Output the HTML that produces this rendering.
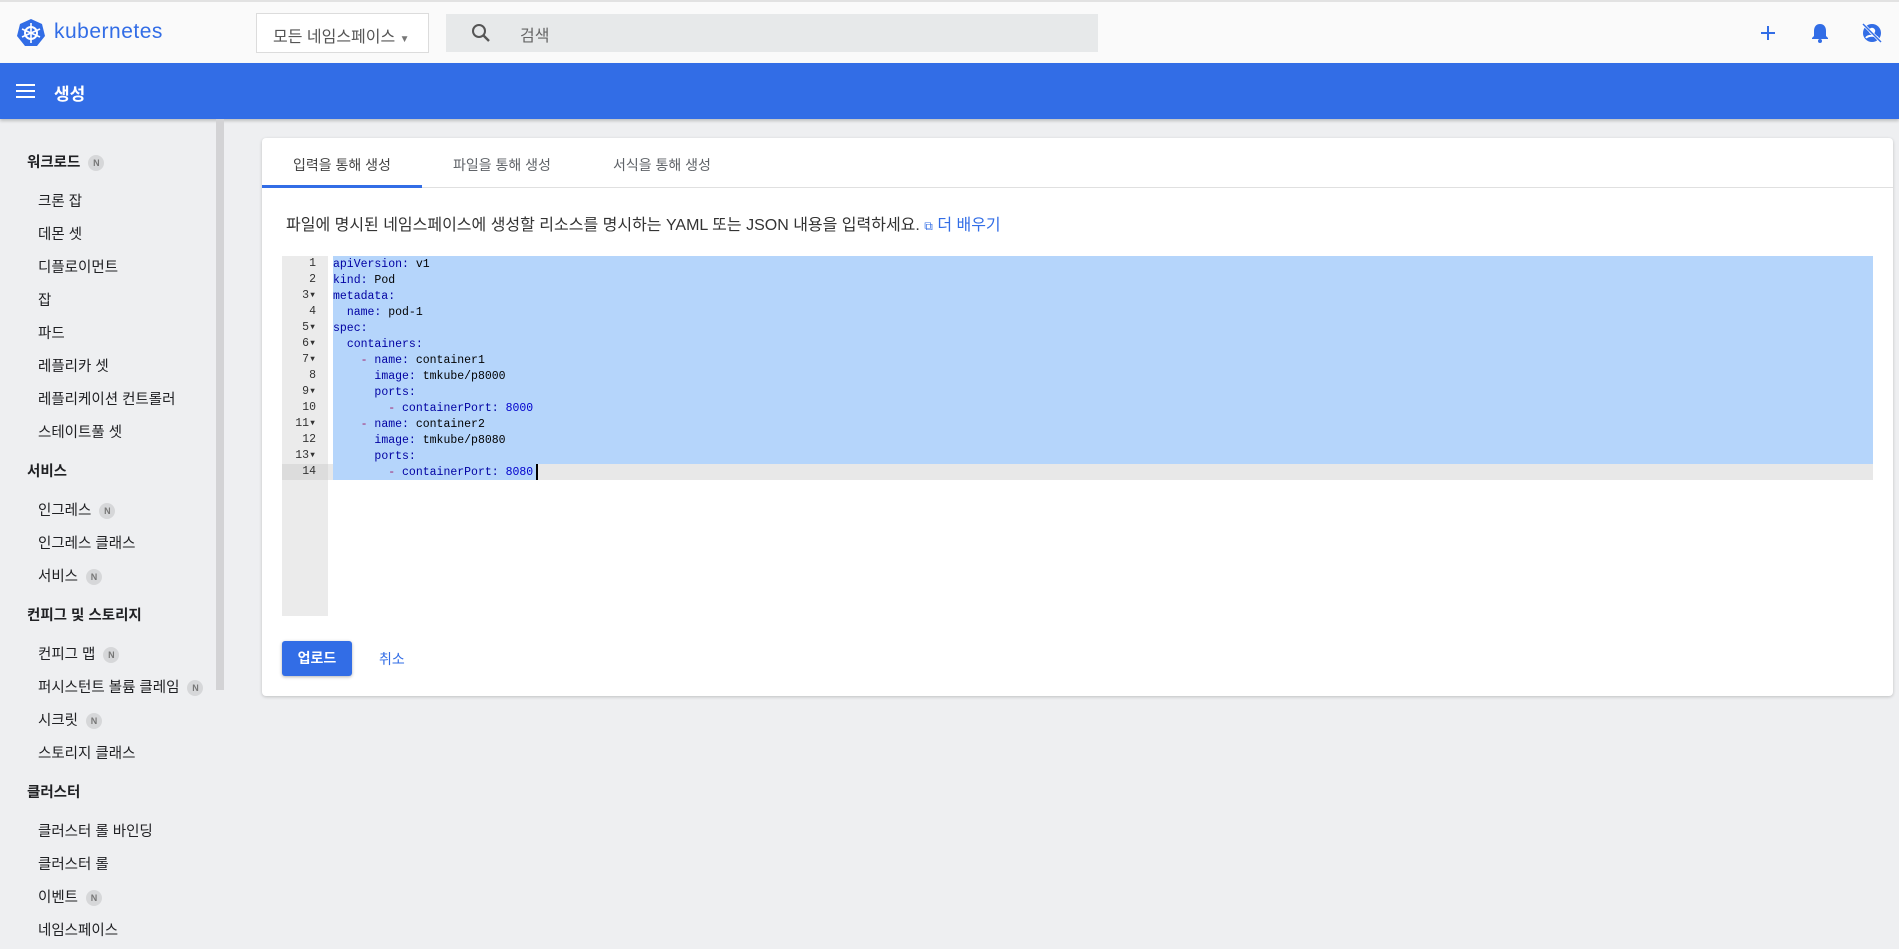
<!DOCTYPE html>
<html><head><meta charset="utf-8"><style>
*{margin:0;padding:0;box-sizing:border-box}
body{width:1899px;height:949px;overflow:hidden;background:#eeeff1;font-family:"Liberation Sans","Noto Sans CJK KR",sans-serif;position:relative;color:#202124}
.abs{position:absolute}
#top{left:0;top:0;width:1899px;height:63px;background:#fafafa;border-top:2px solid #e2e2e2}
#bar{left:0;top:63px;width:1899px;height:56px;background:#326de6;box-shadow:0 2px 3px rgba(0,0,0,.2)}
.side{position:absolute;font-size:14.5px;white-space:nowrap}
.h{left:27px;font-weight:bold}
.i{left:38px}
.n{display:inline-block;width:16px;height:16px;border-radius:50%;background:#d6d7d9;color:#777;font-size:9px;font-weight:bold;text-align:center;line-height:16px;margin-left:8px;vertical-align:1px}
#card{left:262px;top:138px;width:1631px;height:558px;background:#fff;border-radius:4px;box-shadow:0 1px 3px rgba(0,0,0,.2)}
.tab{position:absolute;top:155px;font-size:14px;color:#5f6368}
#ed{left:282px;top:256px;width:1591px;height:360px;background:#fff}
.ln{position:absolute;left:282px;width:46px;height:16px;background:#ebebeb;font:11.5px/16px "Liberation Mono",monospace;color:#333;text-align:right;padding-right:12px}
.cl{position:absolute;left:333px;height:16px;font:11.5px/17px "Liberation Mono",monospace;white-space:pre;color:#000}
.k{color:#0000a2}.d{color:#a0206b}.num{color:#0000cd}
</style></head><body>
<div id="top" class="abs"></div>
<svg class="abs" style="left:16px;top:18px" width="30" height="30" viewBox="0 0 30 30"><polygon points="15,1 26,6 29,18 21,28 9,28 1,18 4,6" fill="#326de6"/><circle cx="15" cy="15" r="6" fill="none" stroke="#fff" stroke-width="2"/><g stroke="#fff" stroke-width="1.6"><line x1="15" y1="5" x2="15" y2="25"/><line x1="6" y1="11" x2="24" y2="19"/><line x1="6" y1="19" x2="24" y2="11"/></g></svg>
<div class="abs" style="left:54px;top:20px;font-size:21px;color:#326de6;letter-spacing:.5px">kubernetes</div>
<div class="abs" style="left:256px;top:13px;width:173px;height:40px;border:1px solid #dcdcdc;background:#fff;font-size:16px;color:#555;padding:9px 0 0 16px">모든 네임스페이스 <span style="font-size:10px;color:#777">▼</span></div>
<div class="abs" style="left:446px;top:14px;width:652px;height:38px;background:#e7e9ea"></div>
<svg class="abs" style="left:470px;top:22px" width="22" height="22" viewBox="0 0 22 22"><circle cx="9" cy="9" r="6" fill="none" stroke="#555" stroke-width="2"/><line x1="13.5" y1="13.5" x2="19" y2="19" stroke="#555" stroke-width="2.4"/></svg>
<div class="abs" style="left:520px;top:22px;font-size:16px;color:#666">검색</div>
<svg class="abs" style="left:1759px;top:24px" width="18" height="18"><path d="M9 2v14M2 9h14" stroke="#326de6" stroke-width="2"/></svg>
<svg class="abs" style="left:1810px;top:22px" width="20" height="22" viewBox="0 0 20 22"><path d="M10 2c-4 0-6 3-6 7v5l-2 2v1h16v-1l-2-2V9c0-4-2-7-6-7z" fill="#326de6"/><circle cx="10" cy="19" r="2" fill="#326de6"/></svg>
<svg class="abs" style="left:1860px;top:21px" width="24" height="24" viewBox="0 0 24 24"><circle cx="12" cy="12" r="9" fill="#326de6"/><circle cx="12" cy="10" r="3.2" fill="#fff"/><path d="M6 17c2-3 10-3 12 0" stroke="#fff" stroke-width="2" fill="none"/><line x1="3" y1="3" x2="21" y2="21" stroke="#fff" stroke-width="3"/><line x1="3" y1="3" x2="21" y2="21" stroke="#326de6" stroke-width="1.5"/></svg>
<div id="bar" class="abs"></div>
<svg class="abs" style="left:16px;top:84px" width="20" height="14"><path d="M0 1h19M0 7h19M0 13h19" stroke="#fff" stroke-width="2"/></svg>
<div class="abs" style="left:54px;top:80px;font-size:17px;color:#fff;font-weight:bold">생성</div>
<div class="abs" style="left:216px;top:119px;width:8px;height:571px;background:#d3d3d5"></div>
<div class="side h" style="top:151px">워크로드<span class="n">N</span></div>
<div class="side i" style="top:190px">크론 잡</div>
<div class="side i" style="top:223px">데몬 셋</div>
<div class="side i" style="top:256px">디플로이먼트</div>
<div class="side i" style="top:289px">잡</div>
<div class="side i" style="top:322px">파드</div>
<div class="side i" style="top:355px">레플리카 셋</div>
<div class="side i" style="top:388px">레플리케이션 컨트롤러</div>
<div class="side i" style="top:421px">스테이트풀 셋</div>
<div class="side h" style="top:460px">서비스</div>
<div class="side i" style="top:499px">인그레스<span class="n">N</span></div>
<div class="side i" style="top:532px">인그레스 클래스</div>
<div class="side i" style="top:565px">서비스<span class="n">N</span></div>
<div class="side h" style="top:604px">컨피그 및 스토리지</div>
<div class="side i" style="top:643px">컨피그 맵<span class="n">N</span></div>
<div class="side i" style="top:676px">퍼시스턴트 볼륨 클레임<span class="n">N</span></div>
<div class="side i" style="top:709px">시크릿<span class="n">N</span></div>
<div class="side i" style="top:742px">스토리지 클래스</div>
<div class="side h" style="top:781px">클러스터</div>
<div class="side i" style="top:820px">클러스터 롤 바인딩</div>
<div class="side i" style="top:853px">클러스터 롤</div>
<div class="side i" style="top:886px">이벤트<span class="n">N</span></div>
<div class="side i" style="top:919px">네임스페이스</div>
<div id="card" class="abs"></div>
<div class="tab" style="left:293px;color:#444">입력을 통해 생성</div>
<div class="tab" style="left:453px">파일을 통해 생성</div>
<div class="tab" style="left:613px">서식을 통해 생성</div>
<div class="abs" style="left:262px;top:187px;width:1631px;height:1px;background:#e0e0e0"></div>
<div class="abs" style="left:262px;top:185px;width:160px;height:3px;background:#326de6"></div>
<div class="abs" style="left:286px;top:211px;font-size:16px;color:#333;white-space:nowrap">파일에 명시된 네임스페이스에 생성할 리소스를 명시하는 YAML 또는 JSON 내용을 입력하세요. <span style="color:#326de6"><span style="font-size:12px">⧉</span> 더 배우기</span></div>
<div id="ed" class="abs"></div>
<div class="abs" style="left:282px;top:256px;width:46px;height:360px;background:#ebebeb"></div>
<div class="abs" style="left:333px;top:256px;width:1540px;height:208px;background:#b5d5fb"></div>
<div class="abs" style="left:328px;top:464px;width:1545px;height:16px;background:#e8e8e8"></div>
<div class="abs" style="left:282px;top:464px;width:46px;height:16px;background:#dcdcdc"></div>
<div class="abs" style="left:333px;top:464px;width:204px;height:16px;background:#b5d5fb"></div>
<div class="abs" style="left:536px;top:464px;width:2px;height:16px;background:#000"></div>
<div class="ln" style="top:256px">1 </div><div class="ln" style="top:272px">2 </div><div class="ln" style="top:288px">3▾</div><div class="ln" style="top:304px">4 </div><div class="ln" style="top:320px">5▾</div><div class="ln" style="top:336px">6▾</div><div class="ln" style="top:352px">7▾</div><div class="ln" style="top:368px">8 </div><div class="ln" style="top:384px">9▾</div><div class="ln" style="top:400px">10 </div><div class="ln" style="top:416px">11▾</div><div class="ln" style="top:432px">12 </div><div class="ln" style="top:448px">13▾</div><div class="ln" style="top:464px;background:#dcdcdc">14 </div>
<div class="cl" style="top:256px"><span class="k">apiVersion:</span> v1</div>
<div class="cl" style="top:272px"><span class="k">kind:</span> Pod</div>
<div class="cl" style="top:288px"><span class="k">metadata:</span></div>
<div class="cl" style="top:304px">  <span class="k">name:</span> pod-1</div>
<div class="cl" style="top:320px"><span class="k">spec:</span></div>
<div class="cl" style="top:336px">  <span class="k">containers:</span></div>
<div class="cl" style="top:352px">    <span class="d">-</span> <span class="k">name:</span> container1</div>
<div class="cl" style="top:368px">      <span class="k">image:</span> tmkube/p8000</div>
<div class="cl" style="top:384px">      <span class="k">ports:</span></div>
<div class="cl" style="top:400px">        <span class="d">-</span> <span class="k">containerPort:</span> <span class="num">8000</span></div>
<div class="cl" style="top:416px">    <span class="d">-</span> <span class="k">name:</span> container2</div>
<div class="cl" style="top:432px">      <span class="k">image:</span> tmkube/p8080</div>
<div class="cl" style="top:448px">      <span class="k">ports:</span></div>
<div class="cl" style="top:464px">        <span class="d">-</span> <span class="k">containerPort:</span> <span class="num">8080</span></div>
<div class="abs" style="left:282px;top:641px;width:70px;height:35px;background:#326de6;border-radius:3px;box-shadow:0 1px 3px rgba(0,0,0,.3);color:#fff;font-weight:bold;font-size:14px;text-align:center;line-height:35px">업로드</div>
<div class="abs" style="left:379px;top:649px;color:#326de6;font-size:14px">취소</div>
</body></html>
